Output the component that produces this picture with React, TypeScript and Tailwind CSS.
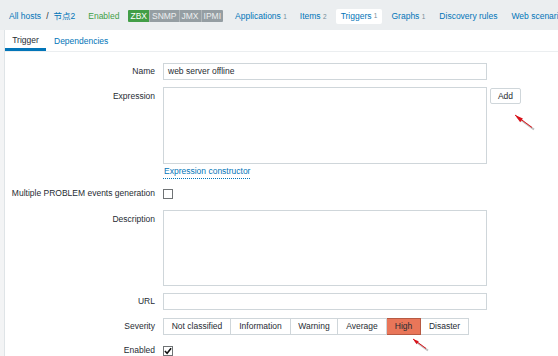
import React from "react";

const font = { fontFamily: '"Liberation Sans", Arial, "Noto Sans CJK SC", sans-serif' };

type Sev = { label: string; w: number; active?: boolean };

const severities: Sev[] = [
  { label: "Not classified", w: 68 },
  { label: "Information", w: 60 },
  { label: "Warning", w: 47 },
  { label: "Average", w: 49 },
  { label: "High", w: 34, active: true },
  { label: "Disaster", w: 48 },
];

function Row({
  label,
  top,
  children,
  className = "",
}: {
  label: string;
  top?: boolean;
  children: React.ReactNode;
  className?: string;
}) {
  return (
    <div className={`flex ${top ? "items-start" : "items-center"} ${className}`}>
      <div
        className={`w-[151px] shrink-0 pr-px text-right text-[#1f2c33] ${top ? "pt-[5px]" : ""}`}
      >
        {label}
      </div>
      <div className="ml-[7px]">{children}</div>
    </div>
  );
}

function Checkbox({ checked }: { checked?: boolean }) {
  return (
    <div className="flex h-[10px] w-[10px] items-center justify-center border border-[#6f7375] bg-white">
      {checked && (
        <svg width="9" height="8" viewBox="0 0 9 8">
          <path d="M1 4 L3.5 6.5 L8 1" fill="none" stroke="#111" strokeWidth="1.8" />
        </svg>
      )}
    </div>
  );
}

function Arrow({ x, y, len }: { x: number; y: number; len: number }) {
  // arrow pointing up-left, head at (x, y)
  return (
    <svg
      className="pointer-events-none absolute"
      style={{ left: x - 2, top: y - 2 }}
      width={len + 8}
      height={len + 6}
      viewBox={`0 0 ${len + 8} ${len + 6}`}
    >
      <line x1={4} y1={4} x2={len + 3} y2={len * 0.75 + 3} stroke="#000" strokeOpacity="0.25" strokeWidth="2" />
      <line x1={2} y1={2} x2={len + 1} y2={len * 0.75 + 1} stroke="#e3141b" strokeWidth="1" />
      <polygon points={`2,2 ${len * 0.55},${len * 0.3} ${len * 0.4},${len * 0.52}`} fill="#d9121a" />
    </svg>
  );
}

const tag = "flex shrink-0 items-center border-l border-[#b0b6b9] bg-[#959ea3] px-[2px] text-[#eceeef]";

export default function App() {
  return (
    <div
      className="relative h-[356px] w-[558px] overflow-hidden bg-[#f3f4f5] text-[8.5px] leading-none"
      style={font}
    >
      {/* top nav */}
      <div className="flex h-[30px] items-center overflow-hidden whitespace-nowrap bg-[#ebeef0] pl-[9px] pt-[2px] [&>*]:shrink-0">
        <span className="text-[#0275b8]">All hosts</span>
        <span className="ml-[5px] text-[#1f2c33]">/</span>
        <span className="ml-[5px] text-[#0275b8]">节点2</span>
        <span className="ml-[13px] text-[#429e47]">Enabled</span>
        <div className="ml-[9px] flex h-[12px] overflow-hidden rounded-[1px] text-[8.5px]">
          <span className="flex shrink-0 items-center bg-[#429e47] px-[2px] text-white">ZBX</span>
          <span className={tag}>SNMP</span>
          <span className={tag}>JMX</span>
          <span className={tag}>IPMI</span>
        </div>
        <span className="ml-[12px] text-[#0275b8]">
          Applications <span className="text-[6.5px] text-[#768d99]">1</span>
        </span>
        <span className="ml-[13px] text-[#0275b8]">
          Items <span className="text-[6.5px] text-[#768d99]">2</span>
        </span>
        <span className="ml-[9px] flex h-[15px] items-center rounded-[2px] bg-white px-[5px] text-[#0275b8]">
          Triggers&nbsp;<span className="text-[6.5px] text-[#768d99]">1</span>
        </span>
        <span className="ml-[9px] text-[#0275b8]">
          Graphs <span className="text-[6.5px] text-[#768d99]">1</span>
        </span>
        <span className="ml-[14px] text-[#0275b8]">Discovery rules</span>
        <span className="ml-[14px] text-[#0275b8]">Web scenarios</span>
      </div>

      {/* panel */}
      <div className="ml-[4px] h-full border-l border-[#dfe4e7] bg-white">
        <div className="flex h-[22px] items-stretch border-b border-[#ebeef0]">
          <div className="flex w-[41px] items-center justify-center border-b-[3px] border-[#0275b8] pt-[3px] text-[#1f2c33]">
            Trigger
          </div>
          <div className="ml-[8px] flex items-center pt-px text-[#0275b8]">Dependencies</div>
        </div>

        <div className="pt-[11px]">
          <Row label="Name">
            <div className="flex h-[17px] w-[324px] items-center border border-[#cfd6da] px-[4px] text-[#1f2c33]">
              web server offline
            </div>
          </Row>

          <Row label="Expression" top className="mt-[7px]">
            <div className="flex items-start">
              <div className="h-[77px] w-[324px] border border-[#cfd6da]" />
              <div className="ml-[3px] mt-px flex h-[16px] w-[31px] items-center justify-center rounded-[2px] border border-[#cfd6da] text-[#1f2c33]">
                Add
              </div>
            </div>
            <div className="mt-[3px] inline-block border-b border-dotted border-[#0275b8] pb-[2px] pl-px text-[#0275b8]">
              Expression constructor
            </div>
          </Row>

          <Row label="Multiple PROBLEM events generation" className="mt-[10px] h-[10px]">
            <Checkbox />
          </Row>

          <Row label="Description" top className="mt-[11px]">
            <div className="h-[76px] w-[324px] border border-[#cfd6da]" />
          </Row>

          <Row label="URL" className="mt-[7px]">
            <div className="h-[17px] w-[324px] border border-[#cfd6da]" />
          </Row>

          <Row label="Severity" className="mt-[8px]">
            <div className="flex h-[17px]">
              {severities.map((s, i) => (
                <div
                  key={s.label}
                  style={{ width: s.w }}
                  className={`flex items-center justify-center border-y border-r text-[#1f2c33] ${
                    i === 0 ? "border-l" : ""
                  } ${s.active ? "border-[#b65a44] bg-[#e97659]" : "border-[#cfd6da] bg-white"}`}
                >
                  {s.label}
                </div>
              ))}
            </div>
          </Row>

          <Row label="Enabled" className="mt-[11px] h-[10px]">
            <Checkbox checked />
          </Row>
        </div>
      </div>

      <Arrow x={515} y={115} len={18} />
      <Arrow x={413} y={339} len={14} />
    </div>
  );
}
